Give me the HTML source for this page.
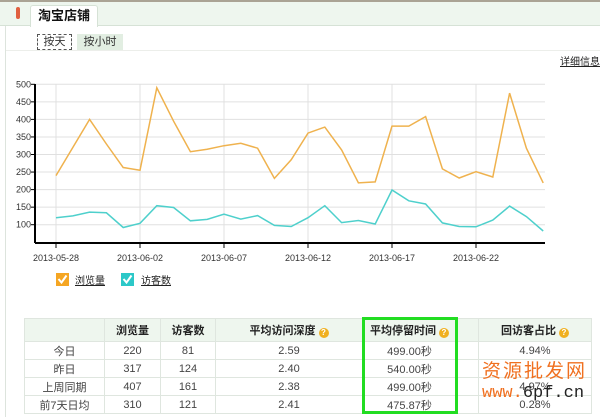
<!DOCTYPE html>
<html><head><meta charset="utf-8">
<style>
*{margin:0;padding:0;box-sizing:border-box}
body{width:600px;height:417px;background:#fff;font-family:"Liberation Sans","Noto Sans CJK SC",sans-serif;font-size:11px;color:#333;position:relative;overflow:hidden}
.abs{position:absolute}
table{border-collapse:collapse;position:absolute;left:24px;top:318px;width:568px;font-size:11px}
td,th{border:1px solid #dfe6df;text-align:center;height:18px;color:#444;font-weight:normal}
th{height:23px;background:#eef6ee;font-weight:bold;color:#222}
.q{display:inline-block;width:10px;height:10px;border-radius:50%;background:#f0b020;vertical-align:-1px;margin-left:3px;color:#fff;font-size:8px;line-height:10px}
</style></head><body>
<div class="abs" style="left:0;top:0;width:600px;height:2px;background:#aaa394"></div>
<div class="abs" style="left:0;top:2px;width:600px;height:24px;background:#eef6ee;border-bottom:1px solid #d6e2d6"></div>
<div class="abs" style="left:5px;top:26px;width:1px;height:391px;background:#dde4dd"></div>
<div class="abs" style="left:16px;top:7px;width:4px;height:12px;background:#e06040;border-radius:2px"></div>
<div class="abs" style="left:30px;top:5px;width:68px;height:22px;background:#fff;border:1px solid #d6e2d6;border-bottom:none;border-radius:3px 3px 0 0;font-weight:bold;font-size:13px;line-height:20px;text-align:center;color:#111">淘宝店铺</div>
<div class="abs" style="left:37px;top:34px;width:35px;height:16px;border:1px dashed #555;text-align:center;line-height:14px;font-size:11px">按天</div>
<div class="abs" style="left:77px;top:34px;width:46px;height:16px;background:#e2eee2;text-align:center;line-height:16px;font-size:11px">按小时</div>
<div class="abs" style="left:6px;top:50px;width:594px;height:1px;background:#eceeea"></div>
<div class="abs" style="left:560px;top:53px;font-size:10px;text-decoration:underline;color:#222">详细信息</div>
<svg class="abs" style="left:0;top:0" width="600" height="300" id="ch">
<g stroke="#e0e0e0" stroke-width="1" id="grid"></g>
<g font-size="9" fill="#333" font-family="Liberation Sans,sans-serif" id="lab"></g>
<line x1="35" y1="84" x2="35" y2="243" stroke="#000" stroke-width="2"/>
<line x1="35" y1="243" x2="545" y2="243" stroke="#000" stroke-width="2"/>
<polyline id="o" fill="none" stroke="#efb24e" stroke-width="1.5"/>
<polyline id="c" fill="none" stroke="#4ed0cc" stroke-width="1.5"/>
<rect x="56" y="273" width="13" height="13" fill="#f5a623"/>
<path d="M58.5 279 l3 3.5 l5-7" stroke="#fff" stroke-width="2" fill="none"/>
<rect x="121" y="273" width="13" height="13" fill="#2cc8c8"/>
<path d="M123.5 279 l3 3.5 l5-7" stroke="#fff" stroke-width="2" fill="none"/>
<text x="75" y="284" font-size="10" fill="#222" text-decoration="underline" font-family="Liberation Sans,Noto Sans CJK SC,sans-serif">浏览量</text>
<text x="141" y="284" font-size="10" fill="#222" text-decoration="underline" font-family="Liberation Sans,Noto Sans CJK SC,sans-serif">访客数</text>
</svg>
<script>
var ns="http://www.w3.org/2000/svg";
function Y(v){return 84.3+(500-v)*0.351}
function X(i){return 56+16.8*i}
var g=document.getElementById('grid'),lab=document.getElementById('lab');
for(var v=100;v<=500;v+=50){var l=document.createElementNS(ns,'line');l.setAttribute('x1',35);l.setAttribute('x2',545);l.setAttribute('y1',Y(v));l.setAttribute('y2',Y(v));g.appendChild(l);
var t=document.createElementNS(ns,'text');t.setAttribute('x',31);t.setAttribute('y',Y(v)+3);t.setAttribute('text-anchor','end');t.textContent=v;lab.appendChild(t);
var tk=document.createElementNS(ns,'line');tk.setAttribute('x1',31);tk.setAttribute('x2',35);tk.setAttribute('y1',Y(v));tk.setAttribute('y2',Y(v));tk.setAttribute('stroke','#000');lab.appendChild(tk);}
var d=['2013-05-28','2013-06-02','2013-06-07','2013-06-12','2013-06-17','2013-06-22'];
for(var i=0;i<6;i++){var x=56+84*i;var l=document.createElementNS(ns,'line');l.setAttribute('x1',x);l.setAttribute('x2',x);l.setAttribute('y1',84);l.setAttribute('y2',243);g.appendChild(l);
var tk=document.createElementNS(ns,'line');tk.setAttribute('x1',x);tk.setAttribute('x2',x);tk.setAttribute('y1',243);tk.setAttribute('y2',248);tk.setAttribute('stroke','#000');lab.appendChild(tk);
var t=document.createElementNS(ns,'text');t.setAttribute('x',x);t.setAttribute('y',261);t.setAttribute('text-anchor','middle');t.textContent=d[i];lab.appendChild(t);}
var o=[240,320,400,330,263,255,490,395,308,315,325,332,318,232,285,361,378,313,219,222,381,381,408,259,233,251,236,475,318,219];
var c=[120,125,136,134,92,104,154,149,111,115,130,116,126,98,95,120,154,106,112,102,199,168,159,105,95,94,113,153,123,82];
function pts(a){return a.map(function(v,i){return X(i).toFixed(1)+','+Y(v).toFixed(1)}).join(' ')}
document.getElementById('o').setAttribute('points',pts(o));
document.getElementById('c').setAttribute('points',pts(c));
</script>
<table>
<tr><th style="width:80px"></th><th style="width:56px">浏览量</th><th style="width:55px">访客数</th><th style="width:147px">平均访问深度<span class="q">?</span></th><th style="width:94px">平均停留时间<span class="q">?</span></th><th style="width:22px"></th><th>回访客占比<span class="q">?</span></th></tr>
<tr><td>今日</td><td>220</td><td>81</td><td>2.59</td><td>499.00秒</td><td></td><td>4.94%</td></tr>
<tr><td>昨日</td><td>317</td><td>124</td><td>2.40</td><td>540.00秒</td><td></td><td></td></tr>
<tr><td>上周同期</td><td>407</td><td>161</td><td>2.38</td><td>499.00秒</td><td></td><td>4.97%</td></tr>
<tr><td>前7天日均</td><td>310</td><td>121</td><td>2.41</td><td>475.87秒</td><td></td><td>0.28%</td></tr>
</table>
<div class="abs" style="left:362px;top:317px;width:96px;height:97px;border:3px solid #22dd22"></div>
<div class="abs" style="left:482px;top:356px;font-size:19px;color:#f07020;font-family:'Noto Sans CJK SC',sans-serif;letter-spacing:2px">资源批发网</div>
<div class="abs" style="left:482px;top:384px;font-size:17px;color:#f07020;font-family:'Liberation Mono',monospace">www.<span style="color:#222">6pf.cn</span></div>
</body></html>
